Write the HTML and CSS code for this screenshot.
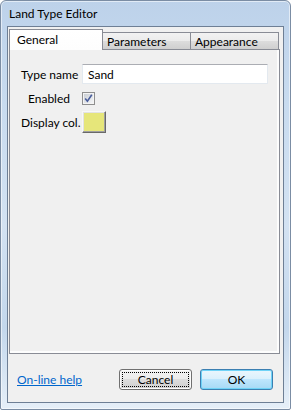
FILE: index.html
```html
<!DOCTYPE html>
<html lang="en">
<head>
    <meta charset="UTF-8">
    <meta name="viewport" content="width=device-width, initial-scale=1.0">
    <title>Land Type Editor</title>
    <link rel="stylesheet" href="styles.css">
</head>
<body>
    <div class="window">
        <div class="titlebar">Land Type Editor</div>

        <div class="client">
            <!-- Tab strip -->
            <div class="tabs">
                <div class="tab tab-active">General</div>
                <div class="tab">Parameters</div>
                <div class="tab">Appearance</div>
            </div>

            <!-- General page -->
            <div class="panel">
                <div class="form">
                    <label class="label" for="type-name">Type name</label>
                    <input class="field" id="type-name" type="text" value="Sand">

                    <label class="label label-check">Enabled</label>
                    <span class="check">
                        <svg width="13" height="13" viewBox="0 0 13 13">
                            <defs>
                                <linearGradient id="cb" x1="0" y1="0" x2="1" y2="1">
                                    <stop offset="0" stop-color="#cbcfd5"/>
                                    <stop offset="1" stop-color="#f4f5f7"/>
                                </linearGradient>
                            </defs>
                            <rect x="0.5" y="0.5" width="12" height="12" fill="#f4f4f4" stroke="#8f8f8f"/>
                            <rect x="2" y="2" width="9" height="9" fill="url(#cb)"/>
                            <path d="M3.2 6.4 L5.4 9.2 L9.8 2.8" fill="none" stroke="#4a5e9c" stroke-width="1.6"/>
                        </svg>
                    </span>

                    <label class="label">Display col.</label>
                    <span class="swatch"></span>
                </div>
            </div>

            <div class="footer">
                <a class="help" href="#">On-line help</a>
                <button class="btn btn-cancel"><span class="focus">Cancel</span></button>
                <button class="btn btn-ok">OK</button>
            </div>
        </div>
    </div>
</body>
</html>
```

FILE: styles.css
```css
body {
    margin: 0;
    padding: 0;
    font-family: Lato, "Noto Sans", Arial, sans-serif;
    font-size: 12px;
    color: #000;
    background: #fff;
}

.window {
    box-sizing: border-box;
    width: 291px;
    height: 410px;
    display: flex;
    flex-direction: column;
    border: 1px solid #7b8da4;
    border-radius: 6px 6px 2px 2px;
    box-shadow: inset 0 0 0 1px rgba(255, 255, 255, 0.55);
    background: linear-gradient(180deg, #bdd2ea 0%, #c8dbef 25%, #d3e2f2 55%, #c3d7ec 80%, #e6eff8 100%);
}

.titlebar {
    height: 25px;
    line-height: 26px;
    padding-left: 8px;
    white-space: nowrap;
}

.client {
    flex: 1;
    display: flex;
    flex-direction: column;
    margin: 0 6px 6px 6px;
    padding: 2px 3px 0 1px;
    border: 1px solid #6e7f95;
    background: #f0f0f0;
}

/* tabs */
.tabs {
    display: flex;
    align-items: flex-end;
    height: 20px;
}

.tab {
    box-sizing: border-box;
    width: 88px;
    height: 17px;
    padding-left: 4px;
    line-height: 17px;
    border: 1px solid #898c95;
    border-bottom: none;
    background: linear-gradient(180deg, #f2f2f2 0%, #ebebeb 50%, #dddddd 50%, #cfcfcf 100%);
    white-space: nowrap;
}

.tab + .tab {
    border-left: none;
}

.tab-active {
    position: relative;
    z-index: 1;
    width: 94px;
    height: 21px;
    margin-bottom: -1px;
    padding-left: 7px;
    line-height: 19px;
    background: linear-gradient(180deg, #ffffff 0%, #fdfdfd 100%);
}

.panel {
    box-sizing: border-box;
    height: 305px;
    border: 1px solid #898c95;
    background: #f0f0f0;
    box-shadow: inset -2px -2px 0 #fdfdfd;
    padding: 12px 0 0 11px;
}

/* form rows */
.form {
    display: grid;
    grid-template-columns: 56px 186px;
    grid-auto-rows: 24px;
    column-gap: 5px;
    align-items: center;
}

.label {
    white-space: nowrap;
}

.label-check {
    text-align: right;
    padding-right: 7px;
}

.field {
    box-sizing: border-box;
    width: 186px;
    height: 20px;
    margin: 0;
    padding: 0 5px;
    font: inherit;
    border: 1px solid #e3e9ef;
    border-top-color: #abadb3;
    border-radius: 1px;
    background: #fff;
    outline: none;
}

.check {
    display: block;
    width: 13px;
    height: 13px;
}

.check svg {
    display: block;
}

.swatch {
    box-sizing: border-box;
    display: block;
    width: 24px;
    height: 22px;
    background: #e6e67a;
    border: 1px solid;
    border-color: #f8f8f8 #696969 #696969 #f8f8f8;
    box-shadow: inset -1px -1px 0 #a0a0a0, inset 1px 1px 0 #e3e3e3;
}

/* bottom bar */
.footer {
    flex: 1;
    display: flex;
    align-items: flex-start;
    padding: 15px 7px 0 8px;
}

.help {
    margin-top: 3px;
    margin-right: auto;
    color: #0066cc;
    text-decoration: underline;
}

.btn {
    box-sizing: border-box;
    width: 73px;
    height: 21px;
    margin: 0;
    padding: 0;
    font: inherit;
    color: #000;
    border-radius: 3px;
}

.btn-cancel {
    padding: 2px;
    border: 1px solid #707070;
    background: linear-gradient(180deg, #f2f2f2 0%, #ebebeb 50%, #dddddd 50%, #cfcfcf 100%);
    box-shadow: inset 0 0 0 1px #fbfbfb;
}

.focus {
    box-sizing: border-box;
    display: block;
    height: 15px;
    line-height: 13px;
    border: 1px dotted #000;
}

.btn-ok {
    margin-left: 8px;
    border: 1px solid #3c7fb1;
    background: linear-gradient(180deg, #eaf6fd 0%, #d9f0fc 50%, #bee6fd 50%, #a7d9f5 100%);
    box-shadow: inset 0 0 0 1px #6fd3f7;
}
```
